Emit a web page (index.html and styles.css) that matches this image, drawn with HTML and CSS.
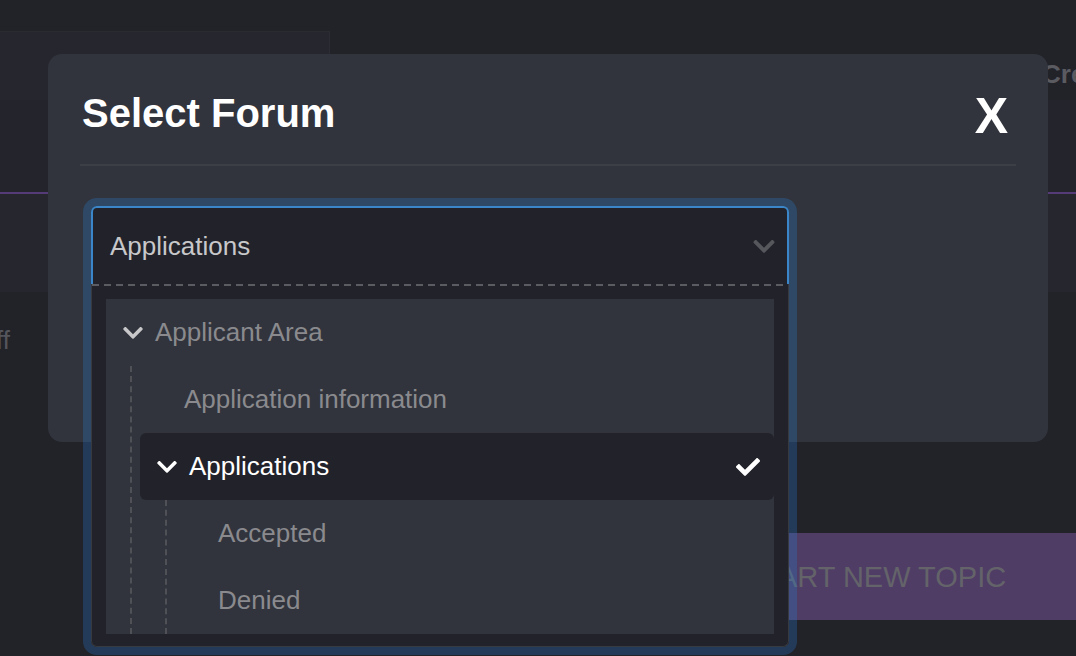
FILE: index.html
```
<!DOCTYPE html>
<html lang="en">
<head>
<meta charset="utf-8">
<title>Select Forum</title>
<link rel="stylesheet" href="styles.css">
</head>
<body>
<div class="page">
  <div class="topgap"></div>
  <div class="headrow">
    <div class="search"></div>
    <div class="create">Create Topic</div>
  </div>
  <div class="nav"></div>
  <div class="subnav"></div>
  <div class="content">
    <p class="staff">ff</p>
    <div class="btnrow"><button class="start">START NEW TOPIC</button></div>
  </div>
</div>

<div class="modal">
  <div class="modal-head">
    <h2 class="title">Select Forum</h2>
    <button class="close">X</button>
  </div>
  <div class="divider"></div>
  <div class="combo">
    <div class="control">
      <span class="value">Applications</span>
      <svg class="trigger-caret" width="22" height="13" viewBox="0 124 448 268"><path fill="currentColor" d="M207.029 381.476L12.686 187.132c-9.373-9.373-9.373-24.569 0-33.941l22.667-22.667c9.357-9.357 24.522-9.375 33.901-.04L224 284.505l154.745-154.021c9.379-9.335 24.544-9.317 33.901.04l22.667 22.667c9.373 9.373 9.373 24.569 0 33.941L240.971 381.476c-9.373 9.372-24.569 9.372-33.942 0z"/></svg>
    </div>
    <div class="menu">
      <ul class="tree">
        <li>
          <div class="row has-caret">
            <span class="caret"><svg width="20" height="12" viewBox="0 124 448 268"><path fill="currentColor" d="M207.029 381.476L12.686 187.132c-9.373-9.373-9.373-24.569 0-33.941l22.667-22.667c9.357-9.357 24.522-9.375 33.901-.04L224 284.505l154.745-154.021c9.379-9.335 24.544-9.317 33.901.04l22.667 22.667c9.373 9.373 9.373 24.569 0 33.941L240.971 381.476c-9.373 9.372-24.569 9.372-33.942 0z"/></svg></span>
            <span>Applicant Area</span>
          </div>
          <ul class="children lvl1">
            <li><div class="row">Application information</div></li>
            <li>
              <div class="row has-caret selected">
                <span class="caret"><svg width="20" height="12" viewBox="0 124 448 268"><path fill="currentColor" d="M207.029 381.476L12.686 187.132c-9.373-9.373-9.373-24.569 0-33.941l22.667-22.667c9.357-9.357 24.522-9.375 33.901-.04L224 284.505l154.745-154.021c9.379-9.335 24.544-9.317 33.901.04l22.667 22.667c9.373 9.373 9.373 24.569 0 33.941L240.971 381.476c-9.373 9.372-24.569 9.372-33.942 0z"/></svg></span>
                <span>Applications</span>
                <svg class="check" width="24" height="18" viewBox="0 64 512 384"><path fill="currentColor" d="M173.898 439.404l-166.4-166.4c-9.997-9.997-9.997-26.206 0-36.204l36.203-36.204c9.997-9.998 26.207-9.998 36.204 0L192 312.69 432.095 72.596c9.997-9.997 26.207-9.997 36.204 0l36.203 36.204c9.997 9.997 9.997 26.206 0 36.204l-294.4 294.401c-9.998 9.997-26.207 9.997-36.204-.001z"/></svg>
              </div>
              <ul class="children lvl2">
                <li><div class="row">Accepted</div></li>
                <li><div class="row">Denied</div></li>
              </ul>
            </li>
          </ul>
        </li>
      </ul>
    </div>
  </div>
</div>
</body>
</html>
```

FILE: styles.css
```
html, body {
  margin: 0;
  padding: 0;
}
body {
  background: #222229;
  font-family: "Liberation Sans", Arial, sans-serif;
  overflow: hidden;
  width: 1076px;
  height: 656px;
}
.page {
  width: 1076px;
  height: 656px;
  overflow: hidden;
}
.topgap {
  height: 31px;
}
.headrow {
  display: flex;
  justify-content: space-between;
  height: 69px;
}
.search {
  width: 330px;
  height: 69px;
  background: #26262e;
  border-right: 1px solid #2c2c34;
  border-top: 1px solid #2a2a32;
  box-sizing: border-box;
}
.create {
  width: 34px;
  overflow: hidden;
  white-space: nowrap;
  padding-top: 28px;
  font-size: 26px;
  line-height: 30px;
  font-weight: bold;
  color: #5a5a61;
}
.nav {
  height: 92px;
  background: #24242c;
  border-bottom: 2px solid #553c78;
}
.subnav {
  height: 98px;
  background: #26262e;
}
.content {
  display: flex;
  flex-direction: column;
}
.staff {
  margin: 33px 0 0 -4px;
  font-size: 26px;
  line-height: 30px;
  color: #55555c;
}
.btnrow {
  margin-top: 178px;
  display: flex;
}
.start {
  margin-left: 700px;
  flex: 0 0 500px;
  height: 87px;
  background: #4f3d66;
  border: 0;
  padding: 2px 0 0 43px;
  text-align: left;
  font-family: "Liberation Sans", Arial, sans-serif;
  font-size: 29px;
  color: #636369;
}

.modal {
  position: fixed;
  left: 48px;
  top: 54px;
  width: 1000px;
  height: 388px;
  box-sizing: border-box;
  padding: 0 32px;
  background: #31343c;
  border-radius: 14px;
}
.modal-head {
  display: flex;
  justify-content: space-between;
  align-items: flex-start;
  padding: 35px 0 27px 0;
}
.title {
  margin: 0 0 0 2px;
  font-size: 40px;
  line-height: 48px;
  font-weight: bold;
  color: #ffffff;
}
.close {
  margin: 3px 8px -3px 0;
  padding: 0;
  background: none;
  border: 0;
  font-family: "Liberation Sans", Arial, sans-serif;
  font-size: 50px;
  line-height: 48px;
  font-weight: bold;
  color: #ffffff;
}
.divider {
  height: 2px;
  background: #3d3f46;
}

.combo {
  margin: 40px 0 0 11px;
  width: 698px;
  border-radius: 6px;
  box-shadow: 0 0 0 8px rgba(40, 120, 200, 0.3);
  position: relative;
}
.control {
  height: 78px;
  box-sizing: border-box;
  display: flex;
  align-items: center;
  justify-content: space-between;
  padding: 0 12px 0 17px;
  background: #22232a;
  border: 2px solid #3a86c8;
  border-bottom: 0;
  border-radius: 6px 6px 0 0;
}
.value {
  font-size: 26px;
  color: #c8c8ca;
}
.trigger-caret {
  color: #55575d;
  display: block;
}
.menu {
  position: relative;
  background: #22232a;
  border: 1px solid #383a41;
  border-top: 0;
  border-radius: 0 0 6px 6px;
  padding: 15px 14px 12px 14px;
}
.menu::before {
  content: "";
  position: absolute;
  left: 0;
  right: 0;
  top: 0;
  height: 2px;
  background-image: repeating-linear-gradient(to right, #5a5c62 0 7px, transparent 7px 12px);
}
.tree, .children {
  list-style: none;
  margin: 0;
  padding: 0;
}
.tree {
  background: #31343c;
}
.lvl1 {
  margin-left: 24px;
  padding-left: 8px;
  border-left: 2px dashed #4f5157;
}
.lvl2 {
  margin-left: 25px;
  padding-left: 7px;
  border-left: 2px dashed #4f5157;
}
.row {
  display: flex;
  align-items: center;
  height: 67px;
  box-sizing: border-box;
  padding: 0 14px 0 44px;
  font-size: 26px;
  color: #8a8a8e;
  white-space: nowrap;
}
.row.has-caret {
  padding-left: 16px;
}
.caret {
  width: 22px;
  margin-right: 11px;
  display: flex;
  justify-content: center;
  color: #c8c8ca;
}
.caret svg {
  display: block;
}
.row.selected {
  background: #22232a;
  border-radius: 6px;
  color: #ffffff;
}
.row.selected .caret {
  color: #ffffff;
}
.check {
  margin-left: auto;
  color: #ffffff;
  display: block;
}
```
